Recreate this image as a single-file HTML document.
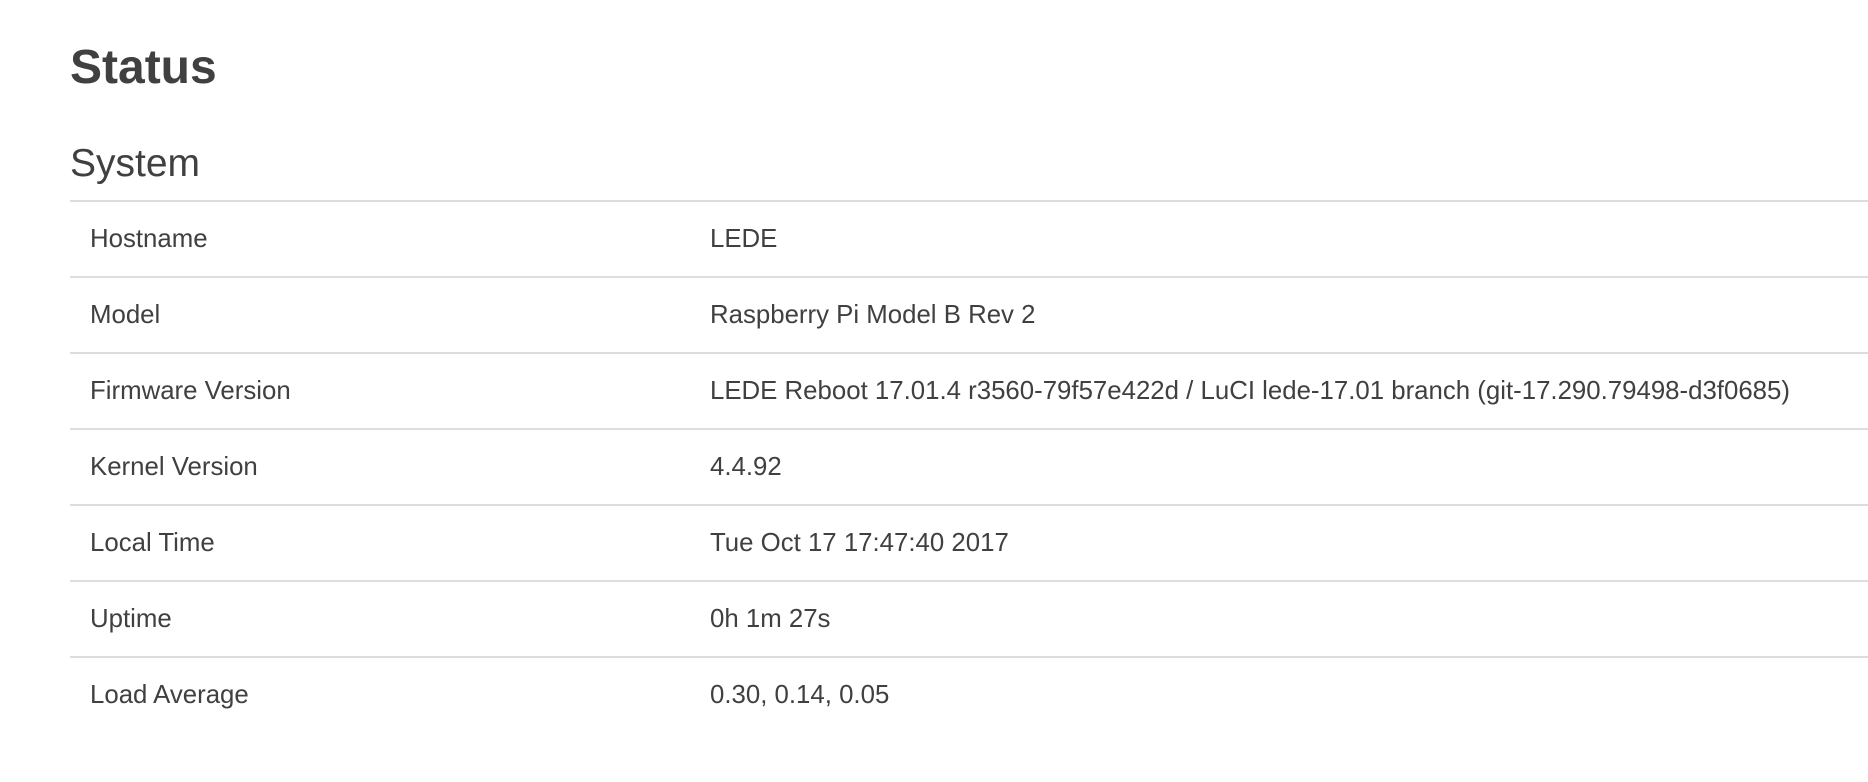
<!DOCTYPE html>
<html><head><style>
body{margin:0;background:#fff;font-family:"Liberation Sans",Arial,sans-serif;color:#404040;width:1868px;height:782px;overflow:hidden;position:relative}
h1{position:absolute;left:70px;top:38px;margin:0;font-size:48px;font-weight:bold;line-height:60px;color:#404040}
h2{position:absolute;left:70px;top:139px;margin:0;font-size:39px;font-weight:normal;line-height:50px;color:#404040}
table{position:absolute;left:70px;top:200px;width:1798px;border-collapse:collapse;font-size:25.8px}
td{height:74px;border-top:2px solid #ddd;padding:0 0 0 20px;vertical-align:middle;white-space:nowrap}
td.v{padding-left:0}
td.l{width:620px}
</style></head><body>
<h1>Status</h1>
<h2>System</h2>
<table>
<tr><td class="l">Hostname</td><td class="v">LEDE</td></tr>
<tr><td class="l">Model</td><td class="v">Raspberry Pi Model B Rev 2</td></tr>
<tr><td class="l">Firmware Version</td><td class="v">LEDE Reboot 17.01.4 r3560-79f57e422d / LuCI lede-17.01 branch (git-17.290.79498-d3f0685)</td></tr>
<tr><td class="l">Kernel Version</td><td class="v">4.4.92</td></tr>
<tr><td class="l">Local Time</td><td class="v">Tue Oct 17 17:47:40 2017</td></tr>
<tr><td class="l">Uptime</td><td class="v">0h 1m 27s</td></tr>
<tr><td class="l">Load Average</td><td class="v">0.30, 0.14, 0.05</td></tr>
</table>
</body></html>
